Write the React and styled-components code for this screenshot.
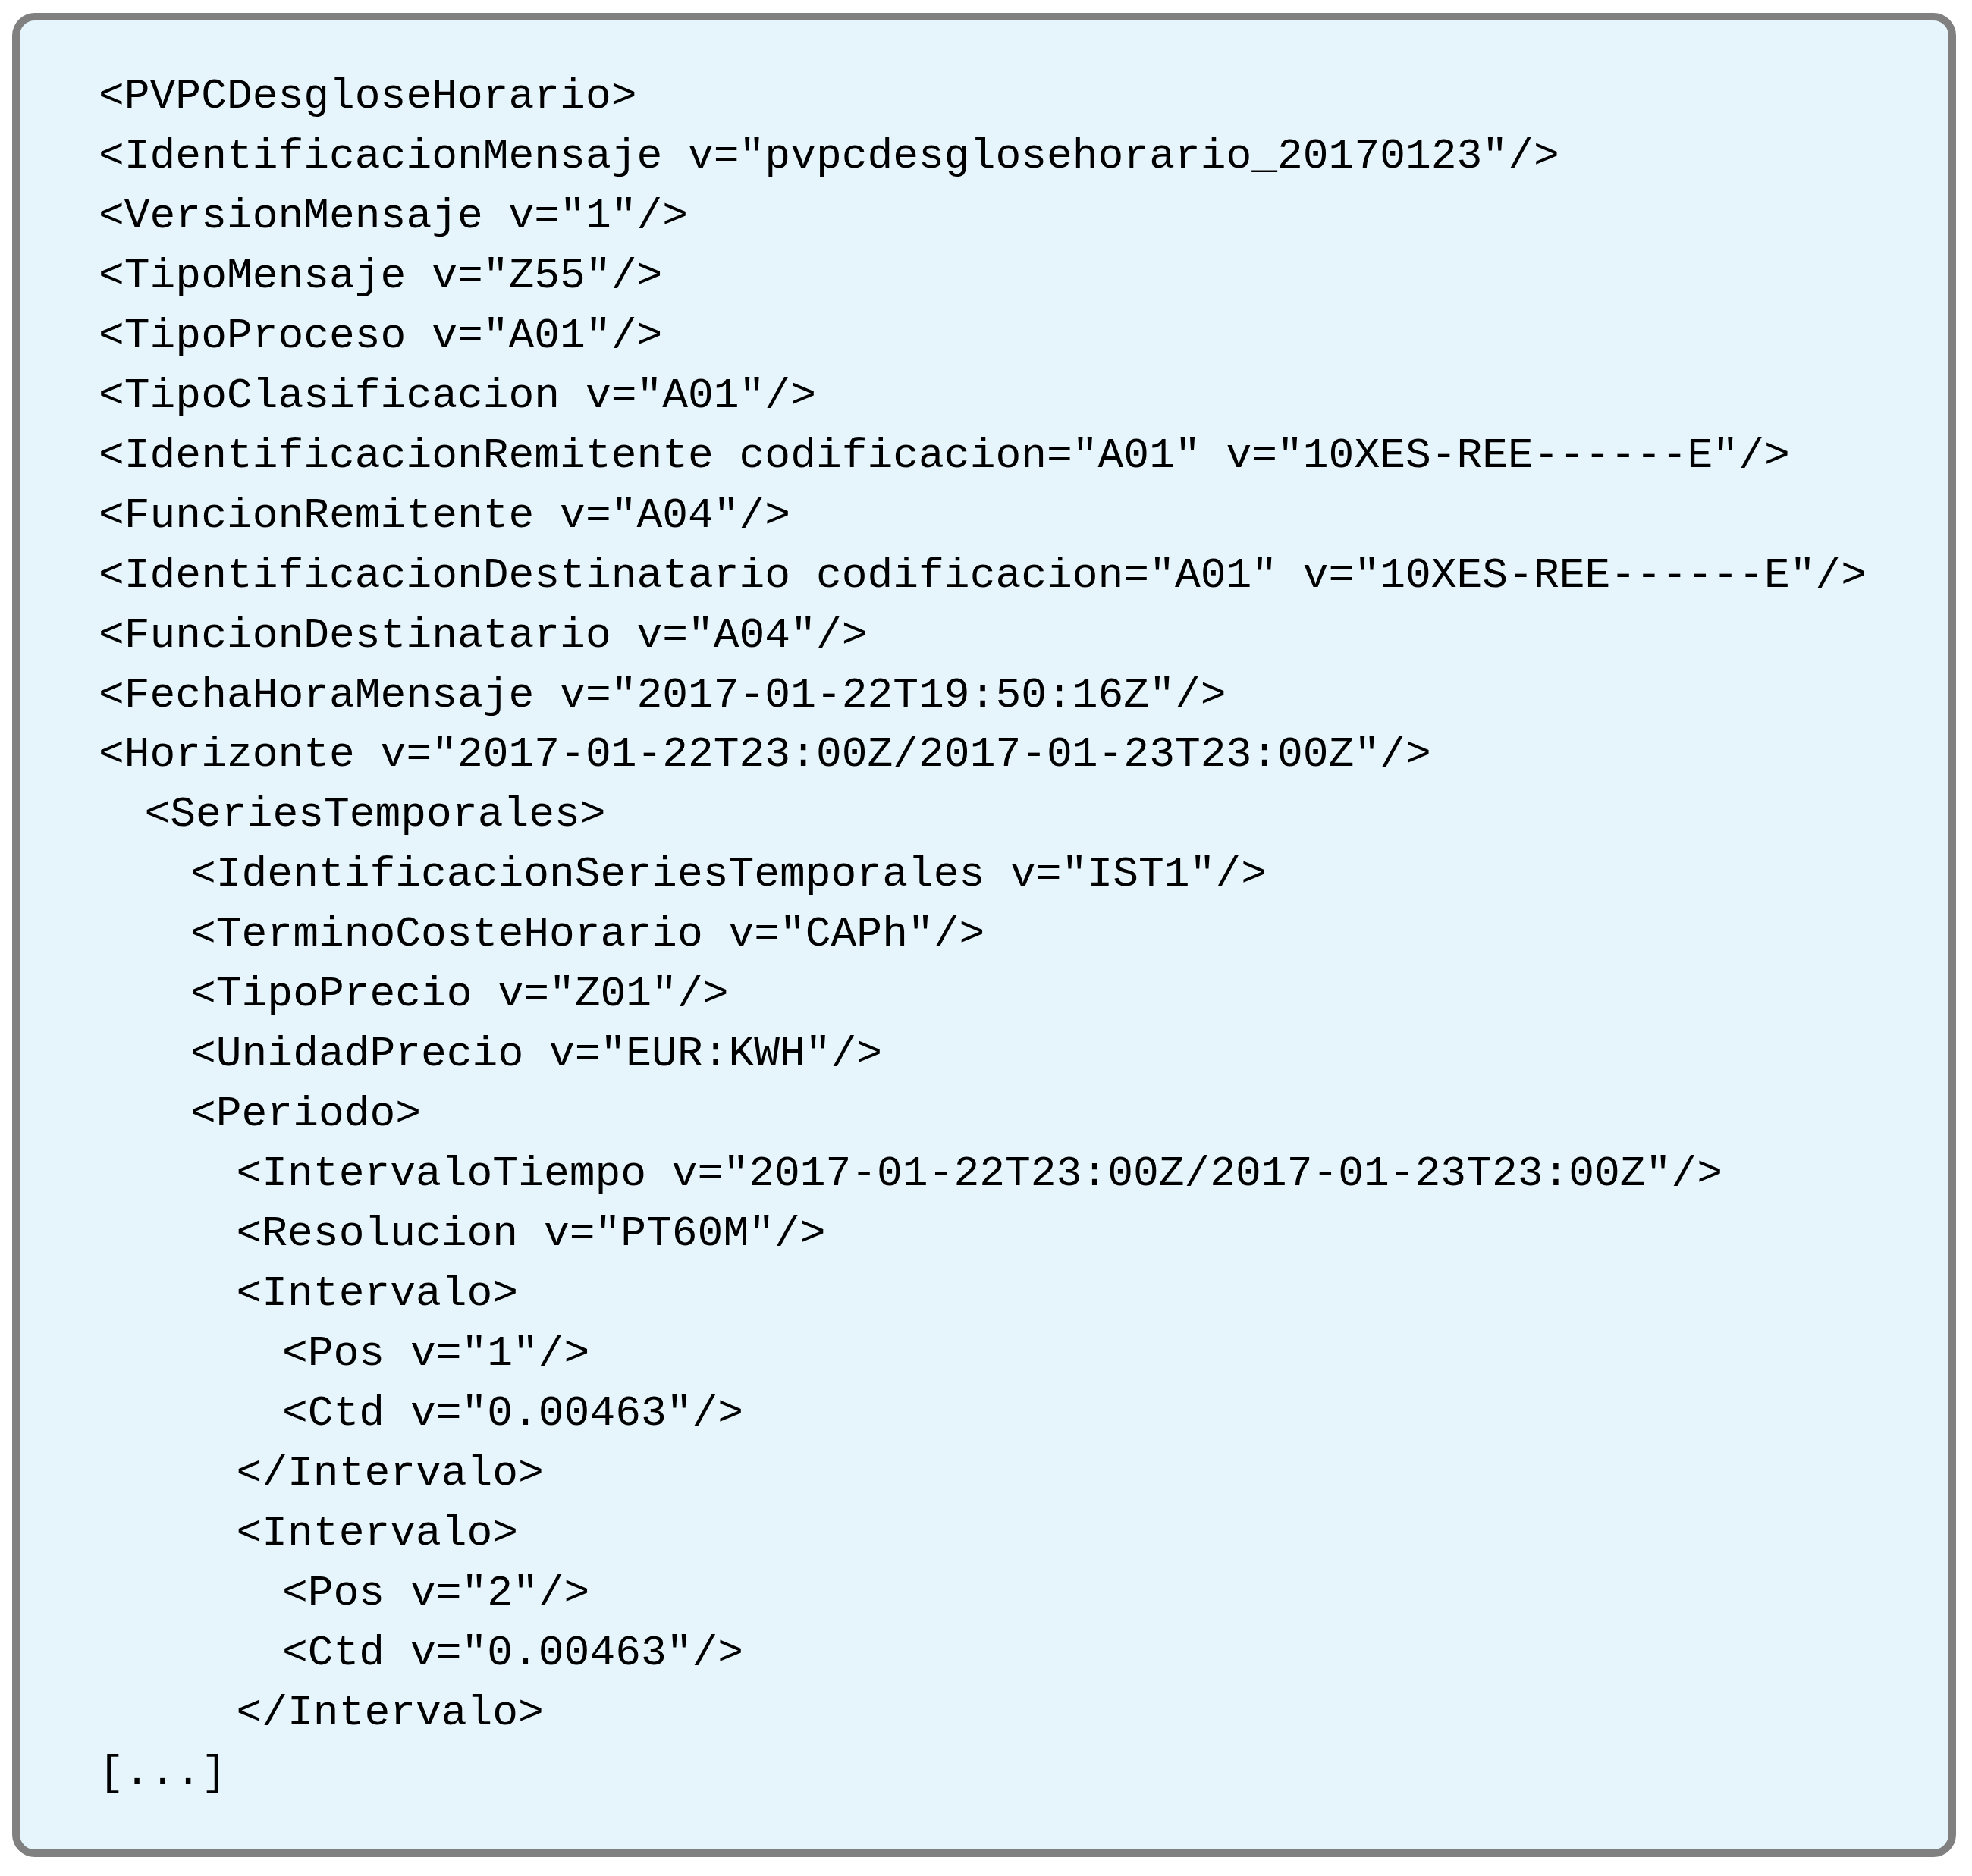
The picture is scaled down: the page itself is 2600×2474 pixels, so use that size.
import React from 'react'
import styled, { createGlobalStyle } from 'styled-components'

const GlobalStyle = createGlobalStyle`
    html, body {
        margin: 0;
        padding: 0;
        background: #ffffff;
    }
`;

const Page = styled.div`
    width: 2600px;
    height: 2474px;
    padding: 17px 0 0 16px;
    box-sizing: border-box;
`;

const Box = styled.div`
    box-sizing: border-box;
    width: 2563px;
    height: 2432px;
    border: 10px solid #808080;
    border-radius: 30px;
    background: #e6f5fc;
    padding: 61px 0 0 104px;
`;

const Code = styled.div`
    display: flex;
    flex-direction: column;
    font-family: "Liberation Mono", "DejaVu Sans Mono", monospace;
    font-size: 56.3px;
    line-height: 78.95px;
    color: #000;
`;

const Line = styled.div`
    padding-left: ${p => p.level * 60.5}px;
    white-space: pre;
`;

const lines = [
    [0, '<PVPCDesgloseHorario>'],
    [0, '<IdentificacionMensaje v="pvpcdesglosehorario_20170123"/>'],
    [0, '<VersionMensaje v="1"/>'],
    [0, '<TipoMensaje v="Z55"/>'],
    [0, '<TipoProceso v="A01"/>'],
    [0, '<TipoClasificacion v="A01"/>'],
    [0, '<IdentificacionRemitente codificacion="A01" v="10XES-REE------E"/>'],
    [0, '<FuncionRemitente v="A04"/>'],
    [0, '<IdentificacionDestinatario codificacion="A01" v="10XES-REE------E"/>'],
    [0, '<FuncionDestinatario v="A04"/>'],
    [0, '<FechaHoraMensaje v="2017-01-22T19:50:16Z"/>'],
    [0, '<Horizonte v="2017-01-22T23:00Z/2017-01-23T23:00Z"/>'],
    [1, '<SeriesTemporales>'],
    [2, '<IdentificacionSeriesTemporales v="IST1"/>'],
    [2, '<TerminoCosteHorario v="CAPh"/>'],
    [2, '<TipoPrecio v="Z01"/>'],
    [2, '<UnidadPrecio v="EUR:KWH"/>'],
    [2, '<Periodo>'],
    [3, '<IntervaloTiempo v="2017-01-22T23:00Z/2017-01-23T23:00Z"/>'],
    [3, '<Resolucion v="PT60M"/>'],
    [3, '<Intervalo>'],
    [4, '<Pos v="1"/>'],
    [4, '<Ctd v="0.00463"/>'],
    [3, '</Intervalo>'],
    [3, '<Intervalo>'],
    [4, '<Pos v="2"/>'],
    [4, '<Ctd v="0.00463"/>'],
    [3, '</Intervalo>'],
    [0, '[...]'],
];

const App = () => {
    return (
        <>
            <GlobalStyle />
            <Page>
                <Box>
                    <Code>
                        {lines.map(([level, text], i) => (
                            <Line key={i} level={level}>{text}</Line>
                        ))}
                    </Code>
                </Box>
            </Page>
        </>
    )
}

export default App
